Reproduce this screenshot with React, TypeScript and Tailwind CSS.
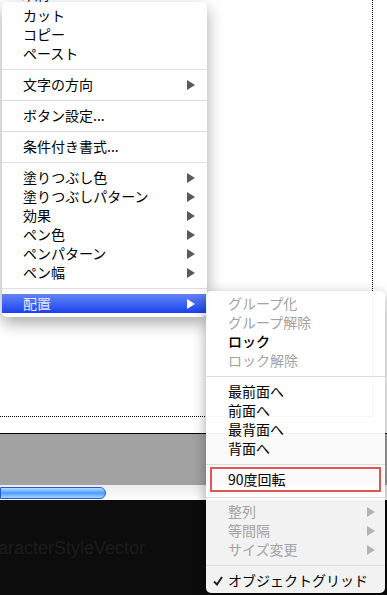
import React from "react";

const Arrow = ({ color }: { color: string }) => (
  <svg width="8" height="10" viewBox="0 0 8 10" className="shrink-0">
    <polygon points="0,0 8,5 0,10" fill={color} />
  </svg>
);

type Item = { label: string; arrow?: boolean; disabled?: boolean; bold?: boolean };

const Sep = () => (
  <div className="h-[12px] flex items-center">
    <div className="h-px w-full bg-[#dedede]" />
  </div>
);

const MainItem = ({ label, arrow, active }: { label: string; arrow?: boolean; active?: boolean }) => (
  <div
    className={
      active
        ? "h-[19px] flex items-center justify-between pl-[21px] pr-[12px] bg-gradient-to-b from-[#6583f6] to-[#1b3ef0] text-[#e6ecff]"
        : "h-[19px] flex items-center justify-between pl-[21px] pr-[12px] text-black"
    }
  >
    <span>{label}</span>
    {arrow && <Arrow color={active ? "#ffffff" : "#5a5a5a"} />}
  </div>
);

const SubItem = ({ label, arrow, disabled, bold }: Item) => (
  <div
    className={
      "h-[19px] flex items-center justify-between pl-[22px] pr-[10px] " +
      (disabled ? "text-[#a3a3a3]" : "text-black") +
      (bold ? " font-medium" : "")
    }
  >
    <span>{label}</span>
    {arrow && <Arrow color="#b4b4b4" />}
  </div>
);

export default function App() {
  return (
    <div className="relative w-[387px] h-[595px] overflow-hidden bg-white font-['Noto_Sans_CJK_JP','Liberation_Sans',sans-serif] text-[14px] leading-[19px]">
      {/* background document */}
      <div className="flex flex-col h-full">
        <div className="w-[373px] h-[417px] border-r border-b border-dotted border-black">
          <div className="ml-[21px] mt-[-14px] text-[14px] leading-[17px] text-black">印刷</div>
        </div>
        <div className="h-[16px] bg-white" />
        <div className="h-px bg-black" />
        <div className="h-[51px] bg-[#a2a2a2]" />
        <div className="h-[15px] bg-gradient-to-b from-[#ececec] to-white flex items-center">
          <div className="w-[106px] h-[12px] rounded-r-full border border-[#1f5fd6] bg-gradient-to-b from-[#b6dcff] via-[#4c9bff] to-[#a7d6ff]" />
        </div>
        <div className="flex-1 bg-[#0c0c0c] pt-[37px]">
          <div className="ml-[-2px] font-['Liberation_Sans',sans-serif] text-[18px] leading-[22px] text-[#1c1c1c]">
            aracterStyleVector
          </div>
        </div>
      </div>

      {/* main context menu */}
      <div className="absolute left-[2px] top-[2px] w-[205px] pt-[4px] pb-[4px] rounded-[5px] bg-white/95 shadow-[0_6px_16px_rgba(0,0,0,0.35)] overflow-hidden">
        <MainItem label="カット" />
        <MainItem label="コピー" />
        <MainItem label="ペースト" />
        <Sep />
        <MainItem label="文字の方向" arrow />
        <Sep />
        <MainItem label="ボタン設定..." />
        <Sep />
        <MainItem label="条件付き書式..." />
        <Sep />
        <MainItem label="塗りつぶし色" arrow />
        <MainItem label="塗りつぶしパターン" arrow />
        <MainItem label="効果" arrow />
        <MainItem label="ペン色" arrow />
        <MainItem label="ペンパターン" arrow />
        <MainItem label="ペン幅" arrow />
        <Sep />
        <MainItem label="配置" arrow active />
      </div>

      {/* submenu */}
      <div className="absolute left-[206px] top-[291px] w-[179px] pt-[3px] pb-[3px] rounded-[5px] bg-white/95 shadow-[0_4px_14px_rgba(0,0,0,0.35)]">
        <SubItem label="グループ化" disabled />
        <SubItem label="グループ解除" disabled />
        <SubItem label="ロック" bold />
        <SubItem label="ロック解除" disabled />
        <Sep />
        <SubItem label="最前面へ" />
        <SubItem label="前面へ" />
        <SubItem label="最背面へ" />
        <SubItem label="背面へ" />
        <Sep />
        <div className="mt-[-3px] mx-[4px] h-[25px] border-2 border-[#e05555] flex items-center pl-[16px] text-black">
          <span>90度回転</span>
        </div>
        <div className="h-[10px] flex items-center">
          <div className="h-px w-full bg-[#dedede]" />
        </div>
        <SubItem label="整列" arrow disabled />
        <SubItem label="等間隔" arrow disabled />
        <SubItem label="サイズ変更" arrow disabled />
        <Sep />
        <div className="h-[19px] flex items-center pl-[7px] text-black">
          <svg width="10" height="10" viewBox="0 0 10 10" className="mr-[5px] shrink-0">
            <path d="M1 5.5 L4 8.5 L9 1" stroke="#222" strokeWidth="2" fill="none" />
          </svg>
          <span>オブジェクトグリッド</span>
        </div>
      </div>
    </div>
  );
}
